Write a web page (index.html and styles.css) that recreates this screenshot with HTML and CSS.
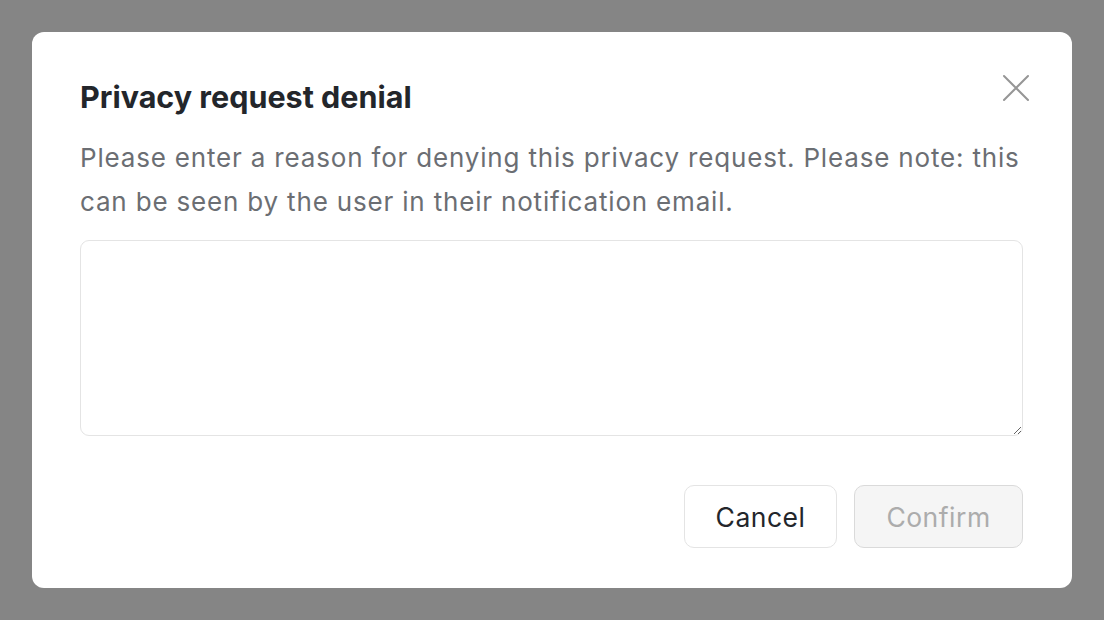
FILE: index.html
```html
<!DOCTYPE html>
<html lang="en">
<head>
<meta charset="utf-8">
<title>Privacy request denial</title>
<link rel="stylesheet" href="styles.css">
</head>
<body>
<div class="overlay">
  <div class="modal" role="dialog" aria-labelledby="title">
    <button class="close" aria-label="Close">
      <svg width="28" height="28" viewBox="0 0 28 28" fill="none" stroke="#969696" stroke-width="2" stroke-linecap="round"><path d="M2 2L26 26M26 2L2 26"/></svg>
    </button>
    <h2 id="title" class="title">Privacy request denial</h2>
    <p class="desc">Please enter a reason for denying this privacy request. Please note: this can be seen by the user in their notification email.</p>
    <textarea class="reason"></textarea>
    <div class="actions">
      <button class="btn cancel">Cancel</button>
      <button class="btn confirm" disabled>Confirm</button>
    </div>
  </div>
</div>
</body>
</html>
```
FILE: styles.css
```css
html, body { margin: 0; padding: 0; }
body {
  font-family: Inter, "Liberation Sans", sans-serif;
  background: #858585;
  width: 1104px;
  height: 620px;
  overflow: hidden;
}
.overlay {
  padding: 32px;
  box-sizing: border-box;
  height: 620px;
}
.modal {
  position: relative;
  background: #fff;
  border-radius: 12px;
  padding: 47px 49px 40px 48px;
  height: 556px;
  box-sizing: border-box;
  display: flex;
  flex-direction: column;
}
.close {
  position: absolute;
  top: 42px;
  right: 42px;
  width: 28px;
  height: 28px;
  padding: 0;
  border: 0;
  background: none;
  display: flex;
}
.title {
  margin: 0;
  font-size: 30.5px;
  font-weight: 700;
  color: #23262b;
  line-height: 36px;
  letter-spacing: 0;
}
.desc {
  margin: 21px 0 0;
  font-size: 26px;
  line-height: 44px;
  color: #6b6e73;
  letter-spacing: 0.82px;
}
.reason {
  margin-top: 16px;
  height: 196px;
  box-sizing: border-box;
  border: 1.5px solid #e4e4e4;
  border-radius: 9px;
  resize: vertical;
  font: inherit;
  display: block;
  width: 100%;
}
.actions {
  display: flex;
  justify-content: flex-end;
  gap: 17px;
  margin-top: 49px;
}
.btn {
  height: 63px;
  box-sizing: border-box;
  border-radius: 10px;
  font-family: Inter, "Liberation Sans", sans-serif;
  font-size: 26.5px;
  letter-spacing: 0.5px;
  padding: 0;
  border: 1.5px solid #e4e4e4;
  background: #fff;
}
.cancel { color: #23262b; width: 153px; }
.confirm {
  width: 169px;
  background: #f5f5f5;
  border-color: #dadada;
  color: #acacac;
}
```
